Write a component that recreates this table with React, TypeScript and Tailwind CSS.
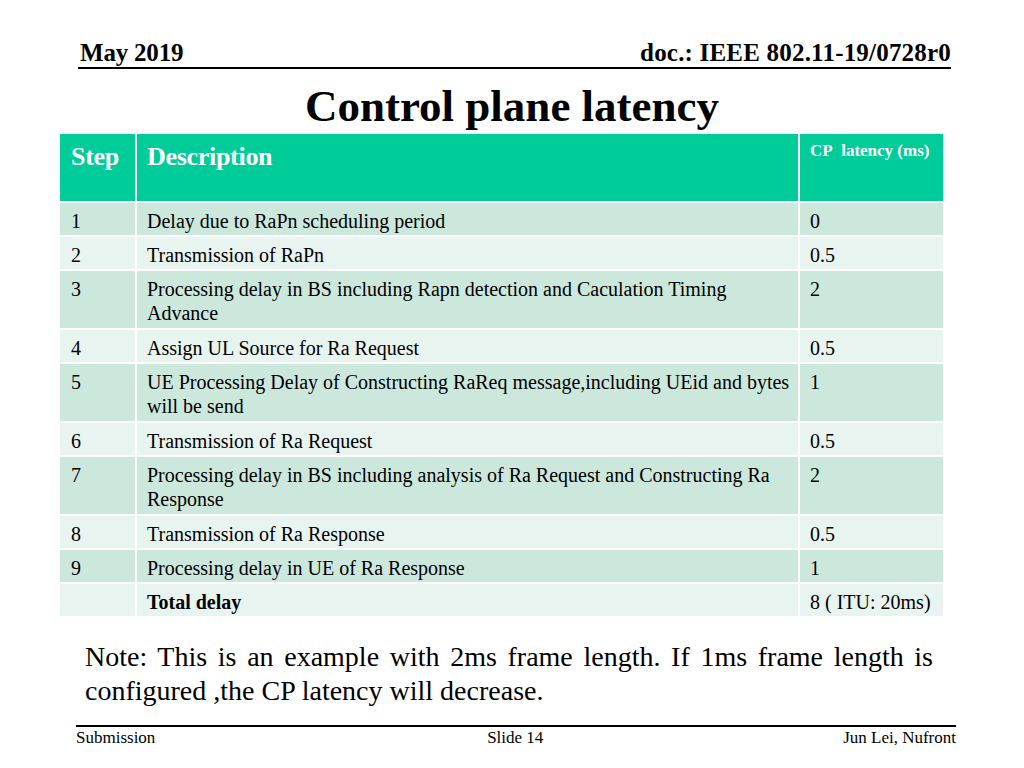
import React from 'react';

type Row = { step: string; desc: string[]; cp: string; bold?: boolean };

const rows: Row[] = [
  { step: '1', desc: ['Delay due to RaPn scheduling period'], cp: '0' },
  { step: '2', desc: ['Transmission of RaPn'], cp: '0.5' },
  { step: '3', desc: ['Processing delay in BS including Rapn detection and Caculation Timing', 'Advance'], cp: '2' },
  { step: '4', desc: ['Assign UL Source for Ra Request'], cp: '0.5' },
  { step: '5', desc: ['UE Processing Delay of Constructing RaReq message,including UEid and bytes', 'will be send'], cp: '1' },
  { step: '6', desc: ['Transmission of Ra Request'], cp: '0.5' },
  { step: '7', desc: ['Processing delay in BS including analysis of Ra Request and Constructing Ra', 'Response'], cp: '2' },
  { step: '8', desc: ['Transmission of Ra Response'], cp: '0.5' },
  { step: '9', desc: ['Processing delay in UE of Ra Response'], cp: '1' },
  { step: '', desc: ['Total delay'], cp: '8 ( ITU: 20ms)', bold: true },
];

const App: React.FC = () => {
  return (
    <div className="w-[1024px] h-[768px] bg-white text-black overflow-hidden font-['Liberation_Serif',serif]">
      {/* header */}
      <div className="ml-[78px] w-[873px] pt-[39px] flex justify-between items-end border-b-2 border-black">
        <span className="text-[25px] font-bold leading-[28px] tracking-[-0.2px] ml-[2px]">May 2019</span>
        <span className="text-[25px] font-bold leading-[28px] tracking-[0.2px]">doc.: IEEE 802.11-19/0728r0</span>
      </div>

      <h1 className="text-center text-[45px] font-bold leading-[50px] mt-[12px]">Control plane latency</h1>

      {/* table */}
      <div className="ml-[60px] mt-[3px] w-[883px] grid grid-cols-[75px_661px_143px] gap-[2px] bg-white">
        <div className="h-[67px] bg-[#00cc99] text-white font-bold text-[26px] leading-[30px] pl-[11px] pt-[8px] tracking-[-0.3px]">Step</div>
        <div className="h-[67px] bg-[#00cc99] text-white font-bold text-[26px] leading-[30px] pl-[10px] pt-[8px] tracking-[-0.3px]">Description</div>
        <div className="h-[67px] bg-[#00cc99] text-white font-bold text-[17px] leading-[20px] pl-[10px] pt-[7px]">CP&nbsp; latency (ms)</div>

        {rows.map((r, i) => {
          const bg = i % 2 === 0 ? 'bg-[#cce8dd]' : 'bg-[#e8f4ef]';
          const h = r.desc.length > 1 ? 'h-[57px]' : 'h-[32px]';
          return (
            <React.Fragment key={i}>
              <div className={`${bg} ${h} pl-[11px] pt-[6px] text-[20px] leading-[24px]`}>{r.step}</div>
              <div className={`${bg} ${h} pl-[10px] pt-[6px] text-[20px] leading-[24px] ${r.bold ? 'font-bold' : ''}`}>
                {r.desc.map((d, j) => <div key={j}>{d}</div>)}
              </div>
              <div className={`${bg} ${h} pl-[10px] pt-[6px] text-[20px] leading-[24px]`}>{r.cp}</div>
            </React.Fragment>
          );
        })}
      </div>

      {/* note */}
      <p className="ml-[85px] w-[848px] mt-[24px] text-[28px] leading-[34px] text-justify">
        Note: This is an example with 2ms frame length. If 1ms frame length is configured ,the CP latency will decrease.
      </p>

      {/* footer */}
      <div className="ml-[76px] w-[880px] mt-[17px] border-t-2 border-black pt-[1px] flex justify-between text-[17px] leading-[20px]">
        <span>Submission</span>
        <span className="ml-[32px]">Slide 14</span>
        <span>Jun Lei, Nufront</span>
      </div>
    </div>
  );
};

export default App;
